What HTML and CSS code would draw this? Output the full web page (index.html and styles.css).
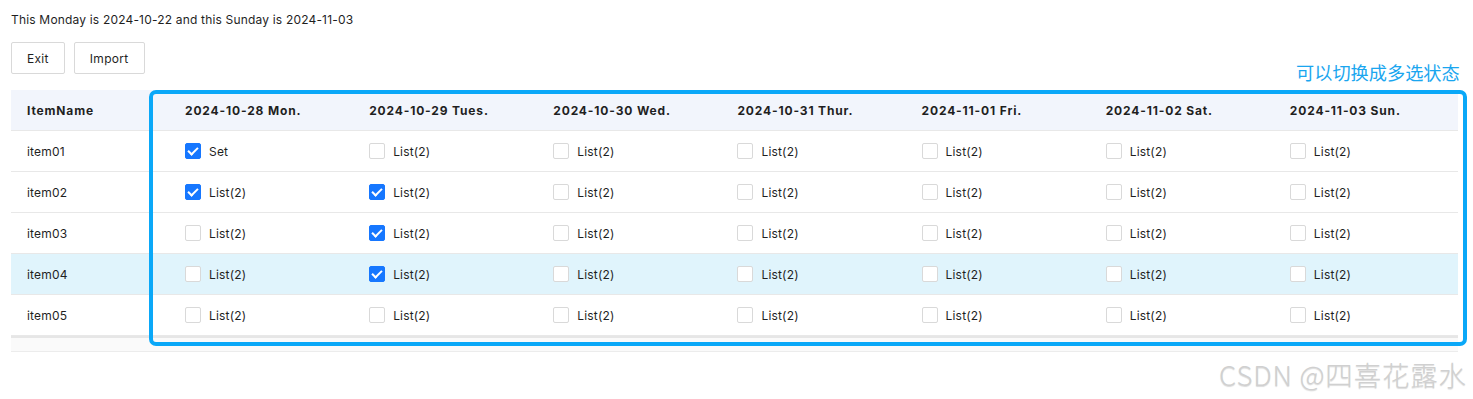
FILE: index.html
```html
<!DOCTYPE html>
<html>
<head>
<meta charset="utf-8">
<link rel="stylesheet" href="styles.css">
</head>
<body>
<div class="page">
  <div class="title">This Monday is 2024-10-22 and this Sunday is 2024-11-03</div>
  <div class="toolbar">
    <button class="btn">Exit</button>
    <button class="btn">Import</button>
  </div>
  <div class="note">可以切换成多选状态</div>
  <div class="table-wrap">
    <div class="table">
      <div class="row head">
        <div class="cell first">ItemName</div>
        <div class="cell">2024-10-28 Mon.</div>
        <div class="cell">2024-10-29 Tues.</div>
        <div class="cell">2024-10-30 Wed.</div>
        <div class="cell">2024-10-31 Thur.</div>
        <div class="cell">2024-11-01 Fri.</div>
        <div class="cell">2024-11-02 Sat.</div>
        <div class="cell">2024-11-03 Sun.</div>
      </div>
      <div class="row">
        <div class="cell first">item01</div>
        <div class="cell"><span class="cb on"></span>Set</div>
        <div class="cell"><span class="cb"></span>List(2)</div>
        <div class="cell"><span class="cb"></span>List(2)</div>
        <div class="cell"><span class="cb"></span>List(2)</div>
        <div class="cell"><span class="cb"></span>List(2)</div>
        <div class="cell"><span class="cb"></span>List(2)</div>
        <div class="cell"><span class="cb"></span>List(2)</div>
      </div>
      <div class="row">
        <div class="cell first">item02</div>
        <div class="cell"><span class="cb on"></span>List(2)</div>
        <div class="cell"><span class="cb on"></span>List(2)</div>
        <div class="cell"><span class="cb"></span>List(2)</div>
        <div class="cell"><span class="cb"></span>List(2)</div>
        <div class="cell"><span class="cb"></span>List(2)</div>
        <div class="cell"><span class="cb"></span>List(2)</div>
        <div class="cell"><span class="cb"></span>List(2)</div>
      </div>
      <div class="row">
        <div class="cell first">item03</div>
        <div class="cell"><span class="cb"></span>List(2)</div>
        <div class="cell"><span class="cb on"></span>List(2)</div>
        <div class="cell"><span class="cb"></span>List(2)</div>
        <div class="cell"><span class="cb"></span>List(2)</div>
        <div class="cell"><span class="cb"></span>List(2)</div>
        <div class="cell"><span class="cb"></span>List(2)</div>
        <div class="cell"><span class="cb"></span>List(2)</div>
      </div>
      <div class="row hover">
        <div class="cell first">item04</div>
        <div class="cell"><span class="cb"></span>List(2)</div>
        <div class="cell"><span class="cb on"></span>List(2)</div>
        <div class="cell"><span class="cb"></span>List(2)</div>
        <div class="cell"><span class="cb"></span>List(2)</div>
        <div class="cell"><span class="cb"></span>List(2)</div>
        <div class="cell"><span class="cb"></span>List(2)</div>
        <div class="cell"><span class="cb"></span>List(2)</div>
      </div>
      <div class="row">
        <div class="cell first">item05</div>
        <div class="cell"><span class="cb"></span>List(2)</div>
        <div class="cell"><span class="cb"></span>List(2)</div>
        <div class="cell"><span class="cb"></span>List(2)</div>
        <div class="cell"><span class="cb"></span>List(2)</div>
        <div class="cell"><span class="cb"></span>List(2)</div>
        <div class="cell"><span class="cb"></span>List(2)</div>
        <div class="cell"><span class="cb"></span>List(2)</div>
      </div>
    </div>
    <div class="scrollbar"></div>
    <div class="highlight"></div>
  </div>
  <div class="watermark">CSDN @四喜花露水</div>
</div>
</body>
</html>
```

FILE: styles.css
```css
html, body {
  margin: 0;
  padding: 0;
  background: #fff;
}
body {
  font-family: "Inter", "Liberation Sans", "Noto Sans CJK SC", sans-serif;
  color: #1f1f1f;
  font-size: 12px;
  letter-spacing: 0.18px;
}
.page {
  position: relative;
  width: 1473px;
  height: 399px;
  padding: 10px 15px 0 11px;
  box-sizing: border-box;
}
.title {
  line-height: 20px;
  height: 20px;
}
.toolbar {
  display: flex;
  gap: 9px;
  margin-top: 12px;
}
.btn {
  height: 32px;
  padding: 0 15px;
  background: #fff;
  border: 1px solid #d9d9d9;
  border-radius: 2px;
  font-family: inherit;
  font-size: 12px;
  letter-spacing: 0.3px;
  color: #1f1f1f;
}
.note {
  position: absolute;
  left: 1296px;
  top: 61px;
  font-size: 18.2px;
  line-height: 22px;
  letter-spacing: 0;
  color: #1aa6ef;
  font-family: "Noto Sans CJK SC", sans-serif;
}
.table-wrap {
  position: relative;
  margin-top: 16px;
  width: 1447px;
}
.row {
  display: grid;
  grid-template-columns: 158px repeat(7, 1fr);
  height: 40px;
  border-bottom: 1px solid #e8e8e8;
  align-items: center;
}
.row.head {
  background: #f2f5fc;
  font-weight: 700;
  letter-spacing: 0.85px;
}
.row.hover {
  background: #e0f4fc;
}
.cell {
  padding-left: 16px;
  display: flex;
  align-items: center;
  white-space: nowrap;
}
.cb {
  width: 14px;
  height: 14px;
  border: 1px solid #d9d9d9;
  border-radius: 2px;
  background: #fff;
  margin-right: 8px;
  position: relative;
  flex: none;
}
.cb.on {
  background: #1677ff;
  border-color: #1677ff;
}
.cb.on::after {
  content: "";
  position: absolute;
  left: 4px;
  top: 1px;
  width: 4px;
  height: 8px;
  border: solid #fff;
  border-width: 0 2px 2px 0;
  transform: rotate(45deg);
}
.scrollbar {
  height: 13px;
  border-top: 2px solid #e6e6e6;
  border-bottom: 1px solid #ececec;
  background: #fafafa;
}
.highlight {
  position: absolute;
  left: 138px;
  top: 0;
  width: 1318px;
  height: 256px;
  box-sizing: border-box;
  border: 4.5px solid #0aa8f8;
  border-radius: 7px;
  pointer-events: none;
}
.watermark {
  position: absolute;
  left: 1219px;
  top: 357px;
  font-size: 27.5px;
  line-height: 34px;
  letter-spacing: 0.8px;
  font-weight: 300;
  color: #d0d0d0;
  text-shadow: 0 1px 1px rgba(0,0,0,0.15);
  font-family: "Noto Sans CJK SC", sans-serif;
}
```
